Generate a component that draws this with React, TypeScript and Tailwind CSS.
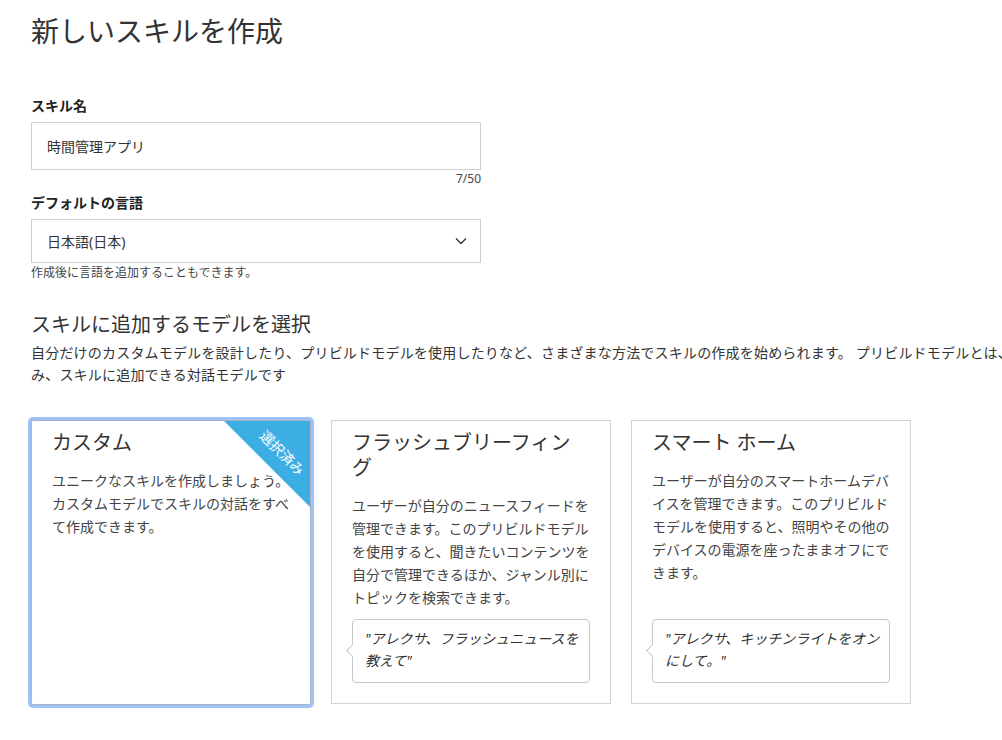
const font = "font-['Noto_Sans','Noto_Sans_CJK_JP',sans-serif]"

type Model = {
  title: string
  body: string
  sample?: string
  selected?: boolean
}

const models: Model[] = [
  {
    title: 'カスタム',
    body: 'ユニークなスキルを作成しましょう。カスタムモデルでスキルの対話をすべて作成できます。',
    selected: true,
  },
  {
    title: 'フラッシュブリーフィング',
    body: 'ユーザーが自分のニュースフィードを管理できます。このプリビルドモデルを使用すると、聞きたいコンテンツを自分で管理できるほか、ジャンル別にトピックを検索できます。',
    sample: '"アレクサ、フラッシュニュースを教えて"',
  },
  {
    title: 'スマート ホーム',
    body: 'ユーザーが自分のスマートホームデバイスを管理できます。このプリビルドモデルを使用すると、照明やその他のデバイスの電源を座ったままオフにできます。',
    sample: '"アレクサ、キッチンライトをオンにして。"',
  },
]

function ModelCard({ m }: { m: Model }) {
  return (
    <div
      className={
        m.selected
          ? 'relative flex h-[285px] w-[280px] flex-col rounded-[2px] border border-[#a9b5c6] bg-white px-5 pt-[9px] pb-5 ring-[3px] ring-[#9fc3f7]'
          : 'relative flex h-[284px] w-[280px] flex-col border border-[#d3d3d3] bg-white px-5 pt-[9px] pb-5'
      }
    >
      {m.selected && (
        <>
          <div className="absolute top-0 right-0 h-[86px] w-[86px] bg-[#3daee3] [clip-path:polygon(0_0,100%_0,100%_100%)]" />
          <div className="absolute top-[23px] right-[-12px] h-[18px] w-[80px] rotate-45 text-center text-[14px] leading-[18px] text-white">
            選択済み
          </div>
        </>
      )}
      <h3 className="text-[20px] leading-[25px] text-[#333]">{m.title}</h3>
      <p className="mt-[14px] text-[14px] leading-[23px] text-[#444]">{m.body}</p>
      {m.sample && (
        <div className="relative mt-auto rounded-[4px] border border-[#c5c8cc] bg-white pt-[8px] pr-[6px] pb-[10px] pl-3">
          <span className="absolute top-[26px] left-[-5px] h-[9px] w-[9px] rotate-45 border-b border-l border-[#c5c8cc] bg-white" />
          <p className="relative text-[14px] leading-[22px] text-[#333] italic">{m.sample}</p>
        </div>
      )}
    </div>
  )
}

export default function App() {
  return (
    <div className={`${font} min-h-screen overflow-hidden bg-white pt-[11px] pl-[31px] text-[#333]`}>
      <h1 className="text-[28px] leading-[40px] font-normal text-[#333]">新しいスキルを作成</h1>

      <div className="mt-[45px] w-[450px]">
        <label className="block text-[14px] leading-[20px] font-bold text-[#222]">スキル名</label>
        <div className="mt-[6px] flex h-[48px] items-center border border-[#ccd0d6] pl-[15px] text-[14px] text-[#333]">
          時間管理アプリ
        </div>
        <div className="mt-[1px] text-right text-[12px] leading-[16px] text-[#444]">7/50</div>

        <label className="mt-[6px] block text-[14px] leading-[20px] font-bold text-[#222]">デフォルトの言語</label>
        <div className="mt-[6px] flex h-[44px] items-center justify-between border border-[#ccd0d6] pr-[13px] pl-[15px] text-[14px] text-[#333]">
          <span>日本語(日本)</span>
          <svg width="12" height="8" viewBox="0 0 12 8" fill="none">
            <path d="M1 1.5l5 5 5-5" stroke="#333" strokeWidth="1.3" />
          </svg>
        </div>
        <p className="mt-[2px] text-[12px] leading-[16px] text-[#444]">作成後に言語を追加することもできます。</p>
      </div>

      <h2 className="mt-[30px] text-[20px] leading-[28px] text-[#333]">スキルに追加するモデルを選択</h2>
      <div className="mt-[3px] text-[14px] leading-[22px] tracking-[0.2px] text-[#333]">
        <p className="whitespace-nowrap">
          自分だけのカスタムモデルを設計したり、プリビルドモデルを使用したりなど、さまざまな方法でスキルの作成を始められます。 プリビルドモデルとは、
        </p>
        <p className="whitespace-nowrap">み、スキルに追加できる対話モデルです</p>
      </div>

      <div className="mt-[34px] flex gap-5">
        {models.map((m) => (
          <ModelCard key={m.title} m={m} />
        ))}
      </div>
    </div>
  )
}
